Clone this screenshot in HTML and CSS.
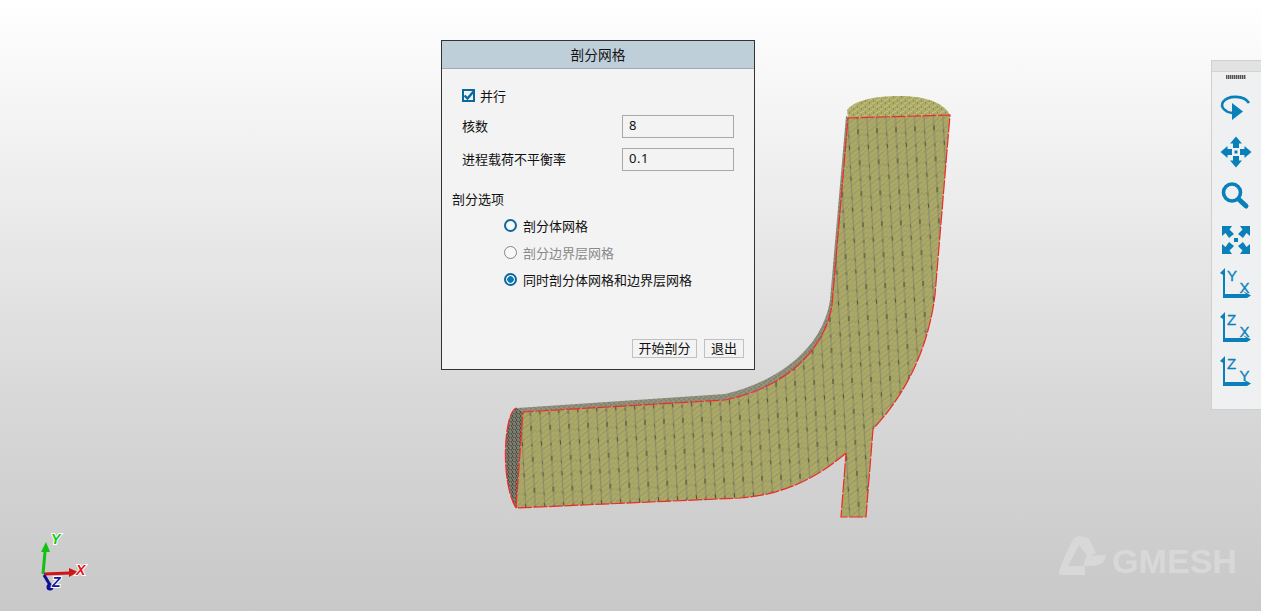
FILE: index.html
```html
<!DOCTYPE html>
<html lang="zh">
<head>
<meta charset="utf-8">
<title>剖分网格</title>
<link rel="stylesheet" href="styles.css">
</head>
<body>
<main class="viewport">
  <svg class="scene" width="1261" height="611" viewBox="0 0 1261 611" aria-hidden="true">
    <defs>
      <pattern id="mesh" width="19" height="31" patternUnits="userSpaceOnUse" patternTransform="rotate(-3)">
        <rect width="19" height="31" fill="#a6a464"/>
        <path d="M0 4 5 0M0 9 12 0M0 14 19 0M0 19 19 5M0 24 19 10M0 29 19 15M5 31 19 21M12 31 19 26" stroke="#b0ae66" stroke-width="1.200"/>
        <path d="M0 6.500 8 0.500M3 14 19 2.500M0 26 19 12M8 31 19 23" stroke="#96966f" stroke-width="1"/>
        <path d="M4.500 0V31M14 0V31" stroke="#8c8c6c" stroke-width="1.200"/>
        <path d="M4.500 4V8M14 19V24" stroke="#55553a" stroke-width="1.200"/>
        <path d="M14 6V9M4.500 24V27" stroke="#6c6c52" stroke-width="1.200"/>
      </pattern>
      <pattern id="meshside" width="5" height="4" patternUnits="userSpaceOnUse">
        <rect width="5" height="4" fill="#92927c"/>
        <path d="M0 1H2M3 3H5" stroke="#74746a" stroke-width="1"/>
      </pattern>
      <pattern id="meshcap" width="8" height="6" patternUnits="userSpaceOnUse">
        <rect width="8" height="6" fill="#adab68"/>
        <path d="M0 2 3 0M4 5 8 3" stroke="#c8c678" stroke-width="1"/>
        <path d="M5 1H6M1 5H2" stroke="#6e6e50" stroke-width="1"/>
      </pattern>
      <pattern id="meshend" width="4" height="4" patternUnits="userSpaceOnUse">
        <rect width="4" height="4" fill="#7c7c6e"/>
        <path d="M0 0 2 2M3 1 4 3M0 3 1 4" stroke="#4a4a40" stroke-width="1"/>
      </pattern>
    </defs>

    <path class="side" d="M517 408 L725 394 C790 378 824 340 830 300 L846 116 L850 118 L836 310 C825 350 785 388 725 400 L523 412Z"/>
    <path class="endcap" d="M516 508 C505 490 503 450 508 425 C510 414 514 408 517 408 L523 412Z"/>
    <path class="cap" d="M848 118 L847 110 C855 100 875 96 900 96 C930 96 945 105 950 115Z"/>
    <path class="front" d="M516 508 L523 412 L725 400 C785 388 825 350 832 305 L848 118 L950 115 L935 295 C928 350 905 395 873 429 L866 517 L841 517 L846 453 C815 480 780 495 740 498Z"/>
    <path class="edge" d="M516 508 L523 412 L725 400 C785 388 825 350 832 305 L848 118 L950 115 L935 295 C928 350 905 395 873 429 L866 517 L841 517 L846 453 M846 453 C815 480 780 495 740 498 L516 508"/>
    <path class="edge" d="M516 508 C505 490 503 450 508 425 C510 414 514 408 517 408"/>

    <g class="triad">
      <path class="triad-y" d="M43 574 L45 552" stroke-width="3"/>
      <path class="triad-y-head" d="M46 542 L50 552 L41 552Z"/>
      <path class="triad-x" d="M44 574 L70 573" stroke-width="3"/>
      <path class="triad-x-head" d="M78 572 L69 568 L69 577Z"/>
      <path class="triad-z" d="M44 575 L50 585" stroke-width="3"/>
      <circle class="triad-z-head" cx="50" cy="587" r="3.500"/>
      <text class="triad-label triad-label-y" x="51" y="544">Y</text>
      <text class="triad-label triad-label-x" x="76" y="575">X</text>
      <text class="triad-label triad-label-z" x="52" y="587">Z</text>
    </g>

    <g class="logo">
      <path d="M1059 574 C1058 570 1072 540 1074 538 C1077 535 1086 536 1089 539 L1096 553 L1088 557 L1079 545 L1068 566 L1085 566 L1085 575 L1062 575Z"/>
      <path d="M1087 556 L1106 555 C1105 563 1100 566 1090 566 L1084 566 C1084 561 1085 558 1087 556Z"/>
      <text class="logo-text" x="1112" y="573" textLength="125" lengthAdjust="spacingAndGlyphs">GMESH</text>
    </g>
  </svg>

  <section class="dialog">
    <header class="dialog-title">剖分网格</header>
    <div class="dialog-body">
      <label class="check-row"><span class="checkbox"><svg width="13" height="13" viewBox="0 0 13 13"><path d="M2.500 6.500 5.500 9.500 11.500 2.500" fill="none" stroke="#0a6aa0" stroke-width="2.400"/></svg></span>并行</label>
      <div class="field-row field-first"><span class="field-label">核数</span><span class="input">8</span></div>
      <div class="field-row field-second"><span class="field-label">进程载荷不平衡率</span><span class="input">0.1</span></div>
      <div class="section-label">剖分选项</div>
      <div class="radios">
        <div class="radio-row"><span class="radio"></span>剖分体网格</div>
        <div class="radio-row radio-disabled"><span class="radio"></span>剖分边界层网格</div>
        <div class="radio-row"><span class="radio radio-on"></span>同时剖分体网格和边界层网格</div>
      </div>
      <div class="actions">
        <button class="btn btn-start" type="button">开始剖分</button>
        <button class="btn btn-exit" type="button">退出</button>
      </div>
    </div>
  </section>

  <aside class="toolbar">
    <div class="toolbar-head"></div>
    <div class="grip"></div>
    <div class="tools">
      <svg class="tool" width="40" height="36" viewBox="0 0 40 36"><path class="ln" d="M33 12 C28 4 12 4 7 11 C4 16 9 21 16 22" stroke-width="2.600"/><path class="fl" d="M16 12 L27 20.500 L16 29Z"/></svg>
      <svg class="tool" width="40" height="36" viewBox="0 0 40 36">
        <path class="fl" d="M20 1.500 L26 8.500 L23 8.500 L23 13 L17 13 L17 8.500 L14 8.500Z"/>
        <path class="fl" d="M20 32.500 L26 25.500 L23 25.500 L23 21 L17 21 L17 25.500 L14 25.500Z"/>
        <path class="fl" d="M4.500 17 L11.500 11 L11.500 14 L16 14 L16 20 L11.500 20 L11.500 23Z"/>
        <path class="fl" d="M35.500 17 L28.500 11 L28.500 14 L24 14 L24 20 L28.500 20 L28.500 23Z"/>
        <rect class="fl" x="18.500" y="15.500" width="3" height="3"/>
      </svg>
      <svg class="tool" width="40" height="36" viewBox="0 0 40 36"><circle class="ln" cx="16" cy="13.500" r="8.500" stroke-width="3.600"/><path class="ln round" d="M23 20.500 L30 27" stroke-width="5"/></svg>
      <svg class="tool" width="40" height="36" viewBox="0 0 40 36">
        <path class="fl" d="M6 3 H16 L13.500 6.500 L18 11 L13 15 L9.500 10 L6 13Z"/>
        <path class="fl" d="M34 3 H24 L26.500 6.500 L22 11 L27 15 L30.500 10 L34 13Z"/>
        <path class="fl" d="M6 31 H16 L13.500 27.500 L18 23 L13 19 L9.500 24 L6 21Z"/>
        <path class="fl" d="M34 31 H24 L26.500 27.500 L22 23 L27 19 L30.500 24 L34 21Z"/>
        <rect class="fl" x="18" y="15" width="4" height="4"/>
      </svg>
      <svg class="tool" width="40" height="36" viewBox="0 0 40 36"><path class="fl" d="M4 6 L9 1 L9 27 L30 27 L27 24 L35 28.500 L31 31 L7 31 L7 8Z"/><text class="axis" x="11" y="14">Y</text><text class="axis" x="23.500" y="26">X</text></svg>
      <svg class="tool" width="40" height="36" viewBox="0 0 40 36"><path class="fl" d="M4 6 L9 1 L9 27 L30 27 L27 24 L35 28.500 L31 31 L7 31 L7 8Z"/><text class="axis" x="11" y="14">Z</text><text class="axis" x="23.500" y="26">X</text></svg>
      <svg class="tool" width="40" height="36" viewBox="0 0 40 36"><path class="fl" d="M4 6 L9 1 L9 27 L30 27 L27 24 L35 28.500 L31 31 L7 31 L7 8Z"/><text class="axis" x="11" y="14">Z</text><text class="axis" x="23.500" y="26">Y</text></svg>
    </div>
  </aside>
</main>
</body>
</html>
```
FILE: styles.css
```css
* { box-sizing: border-box; }
html, body { margin: 0; padding: 0; height: 100%; overflow: hidden; }
body { font-family: "Noto Sans CJK SC", "Noto Sans", sans-serif; font-size: 13px; color: #111; }

.viewport {
  position: relative;
  width: 1261px;
  height: 611px;
  background: linear-gradient(to bottom, #ffffff 0, #fbfbfb 40px, #e6e6e6 260px, #d8d8d8 400px, #c8c8c8 611px);
  overflow: hidden;
}
.scene { position: absolute; left: 0; top: 0; display: block; }

.front { fill: url(#mesh); }
.side { fill: url(#meshside); }
.cap { fill: url(#meshcap); }
.endcap { fill: url(#meshend); }
.edge { fill: none; stroke: #ee2a2a; stroke-width: 1.200; stroke-dasharray: 14 1.500; }

.triad path { fill: none; }
.triad .triad-y { stroke: #12c212; }
.triad .triad-x { stroke: #d01515; }
.triad .triad-z { stroke: #101090; }
.triad .triad-y-head { fill: #12c212; }
.triad .triad-x-head { fill: #d01515; }
.triad-z-head { fill: #101090; }
.triad-label { font: italic bold 14px "Liberation Sans", sans-serif; stroke: #fff; stroke-width: 2; paint-order: stroke; }
.triad-label-y { fill: #18c818; }
.triad-label-x { fill: #e01818; }
.triad-label-z { fill: #1515a0; }

.logo { fill: #d8d8d8; }
.logo-text { font: bold 34px "Liberation Sans", sans-serif; fill: #d8d8d8; }

.dialog {
  position: absolute;
  left: 441px;
  top: 40px;
  width: 314px;
  height: 330px;
  border: 1px solid #333;
  background: #f3f3f3;
  display: flex;
  flex-direction: column;
}
.dialog-title {
  height: 28px;
  flex: none;
  background: #bfcfda;
  border-bottom: 1px solid #9eaab2;
  text-align: center;
  line-height: 27px;
  font-size: 13.700px;
}
.dialog-body {
  flex: 1;
  display: flex;
  flex-direction: column;
  padding: 17px 10px 11px;
}
.check-row {
  display: flex;
  align-items: center;
  height: 20px;
  padding: 0 0 2px 10px;
  gap: 5px;
}
.checkbox {
  width: 13px;
  height: 13px;
  border: 2px solid #0a6aa0;
  background: #f3f3f3;
  display: block;
  position: relative;
}
.checkbox svg { position: absolute; left: -2px; top: -2px; }

.field-row {
  display: flex;
  align-items: center;
  justify-content: space-between;
  height: 23px;
  padding: 0 10px;
}
.field-label { padding-bottom: 2px; }
.field-first { margin-top: 9px; }
.field-second { margin-top: 10px; }
.input {
  width: 112px;
  height: 23px;
  border: 1px solid #a8a8a8;
  padding-left: 6px;
  line-height: 19px;
  letter-spacing: 0.5px;
  font-family: "Noto Sans", sans-serif;
}
.section-label { margin-top: 19px; height: 20px; line-height: 18px; }

.radios { margin-top: 3px; padding-left: 52px; }
.radio-row {
  display: flex;
  align-items: center;
  height: 27px;
  padding-bottom: 2px;
  gap: 6px;
}
.radio {
  width: 13px;
  height: 13px;
  border-radius: 50%;
  border: 2.500px solid #0c689c;
  background: #f8f8f8;
  display: block;
}
.radio-on { background: radial-gradient(circle, #0c78b4 0, #0c78b4 3px, #f8f8f8 3.500px); }
.radio-disabled { color: #8a8a8a; }
.radio-disabled .radio { border: 1.500px solid #858585; }

.actions {
  margin-top: auto;
  display: flex;
  justify-content: flex-end;
  gap: 7px;
}
.btn {
  height: 19px;
  padding: 0 0 2px;
  background: #f3f3f3;
  border: 1px solid #c0c0c0;
  font: 13px/15px "Noto Sans CJK SC", sans-serif;
  color: #111;
}
.btn-start { width: 65px; }
.btn-exit { width: 40px; }

.toolbar {
  position: absolute;
  left: 1211px;
  top: 60px;
  width: 50px;
  height: 350px;
  background: #eef0f2;
  border: 1px solid #d0d0d0;
  border-right: 0;
}
.toolbar-head { height: 11px; background: #e2e2e2; border-bottom: 1px solid #d4d4d4; }
.grip {
  width: 20px;
  height: 4px;
  margin: 3px auto 0 14px;
  background: repeating-linear-gradient(to right, #555 0, #555 1px, #aaa 1px, #aaa 2px);
}
.tools {
  display: flex;
  flex-direction: column;
  align-items: flex-start;
  gap: 8px;
  margin-top: 12px;
  padding-left: 4px;
}
.tool { display: block; flex: none; }
.fl { fill: #0a80ba; }
.ln { fill: none; stroke: #0a80ba; }
.round { stroke-linecap: round; }
.axis { font: 15px "Liberation Sans", sans-serif; fill: #0a80ba; stroke: #0a80ba; stroke-width: 0.300; }
```
